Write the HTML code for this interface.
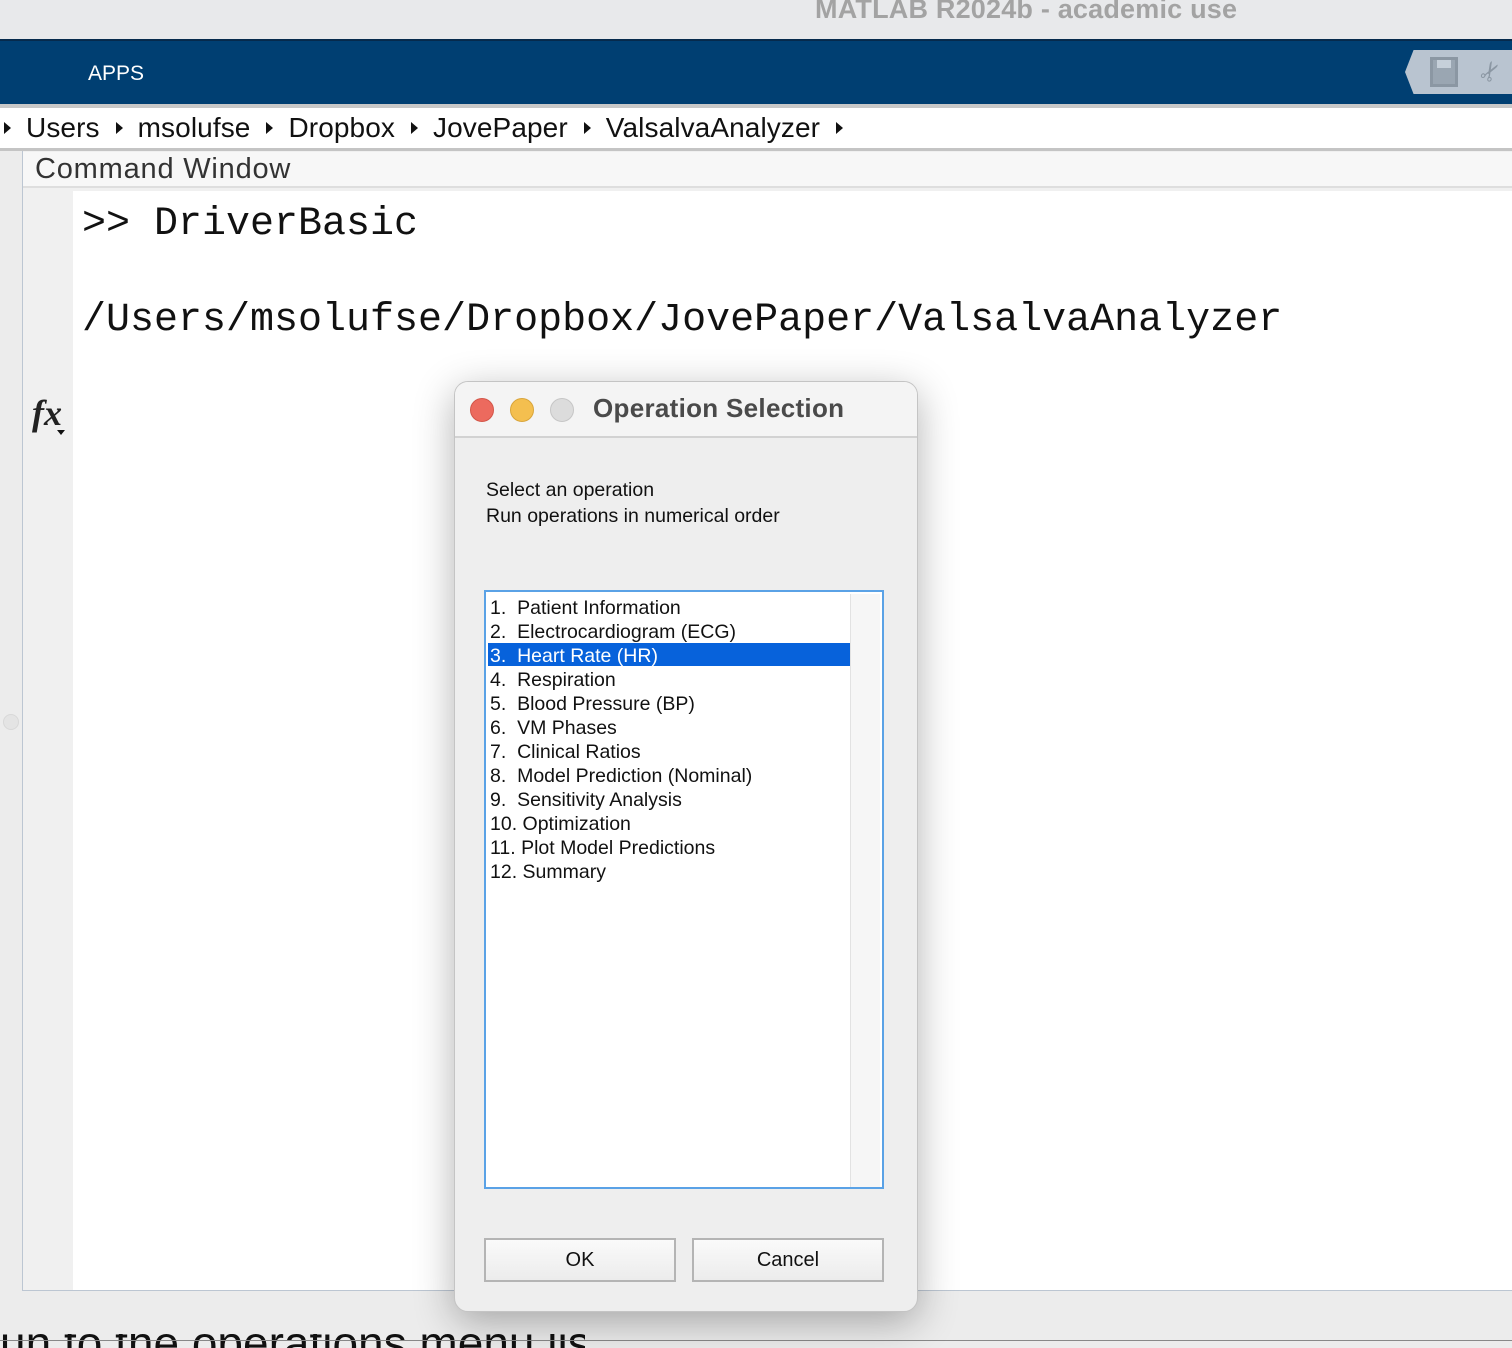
<!DOCTYPE html>
<html><head><meta charset="utf-8"><style>
*{margin:0;padding:0;box-sizing:border-box}
body{width:1512px;height:1346px;overflow:hidden;background:#ececec;font-family:"Liberation Sans",sans-serif;position:relative}
.abs{position:absolute}
.mono{font-family:"Liberation Mono",monospace}
.li{position:absolute;left:4px;font-size:19.5px;height:24px;line-height:24px;color:#111;white-space:pre}
.btn{position:absolute;top:1238px;width:192px;height:44px;border:2px solid #b4b4b4;background:linear-gradient(#fafafa,#ececec);font-size:20px;text-align:center;line-height:40px;color:#111}
.arr{display:inline-block;width:0;height:0;border-top:6px solid transparent;border-bottom:6px solid transparent;border-left:7px solid #111;margin:0 15px 3px 16px;vertical-align:middle}
</style></head><body>
<div class="abs" style="left:0;top:0;width:1512px;height:40px;background:#e8e9eb"></div>
<div class="abs" style="left:815px;top:-6px;font-size:27px;font-weight:bold;color:#a3a3a3;white-space:nowrap;letter-spacing:0.2px">MATLAB R2024b - academic use</div>
<div class="abs" style="left:0;top:39px;width:1512px;height:65px;background:#003f72;border-top:2px solid #062a4c"></div>
<div class="abs" style="left:88px;top:62px;font-size:21px;color:#fff">APPS</div>
<div class="abs" style="left:1405px;top:50px;width:107px;height:44px;background:#b9c4d0;clip-path:polygon(8% 0,100% 0,100% 100%,8% 100%,0 50%)"></div>
<div class="abs" style="left:1430px;top:57px;width:28px;height:30px;background:#9aa6b2;border:3px solid #8b97a3"></div>
<div class="abs" style="left:1437px;top:60px;width:14px;height:8px;background:#c6d0da"></div>
<div class="abs" style="left:1480px;top:56px;color:#8b97a3;font-size:26px;transform:rotate(-60deg)">✂</div>
<div class="abs" style="left:0;top:104px;width:1512px;height:4px;background:#c8c8c8"></div>
<div class="abs" style="left:0;top:108px;width:1512px;height:40px;background:#fff"></div>
<div class="abs" style="left:-12px;top:112px;font-size:28px;color:#111;white-space:nowrap;letter-spacing:0.1px"><span class="arr"></span>Users<span class="arr"></span>msolufse<span class="arr"></span>Dropbox<span class="arr"></span>JovePaper<span class="arr"></span>ValsalvaAnalyzer<span class="arr"></span></div>
<div class="abs" style="left:0;top:148px;width:1512px;height:3px;background:#c4c4c4"></div>
<div class="abs" style="left:22px;top:151px;width:1490px;height:1140px;border-left:1px solid #bcc6d2;border-bottom:1px solid #bcc6d2;background:#f0f0f0"></div>
<div class="abs" style="left:23px;top:152px;width:1489px;height:36px;background:#f7f7f7;border-bottom:2px solid #dedede"></div>
<div class="abs" style="left:35px;top:153px;font-size:29px;color:#333;letter-spacing:0.8px">Command Window</div>
<div class="abs" style="left:73px;top:191px;width:1439px;height:1099px;background:#fff"></div>
<div class="abs mono" style="left:82px;top:202px;font-size:40px;color:#111;white-space:pre">&gt;&gt; DriverBasic</div>
<div class="abs mono" style="left:82px;top:298px;font-size:40px;color:#111;white-space:pre">/Users/msolufse/Dropbox/JovePaper/ValsalvaAnalyzer</div>
<div class="abs" style="left:32px;top:392px;font-size:36px;font-style:italic;font-weight:bold;font-family:'Liberation Serif',serif;color:#222">fx</div>
<div class="abs" style="left:57px;top:430px;width:0;height:0;border-left:4px solid transparent;border-right:4px solid transparent;border-top:5px solid #111"></div>
<div class="abs" style="left:3px;top:714px;width:16px;height:16px;border-radius:50%;background:#e4e4e4;border:1px solid #d8d8d8"></div>
<div class="abs" style="left:0;top:1334px;width:585px;height:14px;overflow:hidden"><div style="font-size:46px;margin-top:-18px;color:#111;white-space:nowrap">un to the operations menu list.</div></div>
<div class="abs" style="left:0;top:1340px;width:1512px;height:1px;background:#888"></div>
<div class="abs" style="left:454px;top:381px;width:464px;height:931px;background:#eeeeee;border:1px solid #c4c4c4;border-radius:14px;box-shadow:0 10px 40px rgba(0,0,0,.3);overflow:hidden">
 <div style="height:56px;background:#f4f4f4;border-bottom:2px solid #d2d2d2"></div>
</div>
<div class="abs" style="left:470px;top:398px;width:24px;height:24px;border-radius:50%;background:#ec6a5e;border:1px solid #d35649"></div>
<div class="abs" style="left:510px;top:398px;width:24px;height:24px;border-radius:50%;background:#f4bf4f;border:1px solid #d9a53a"></div>
<div class="abs" style="left:550px;top:398px;width:24px;height:24px;border-radius:50%;background:#dcdcdc;border:1px solid #c6c6c6"></div>
<div class="abs" style="left:593px;top:393px;font-size:26px;font-weight:bold;color:#4a4a4a;letter-spacing:0.3px">Operation Selection</div>
<div class="abs" style="left:486px;top:477px;font-size:19.5px;color:#111;line-height:26px">Select an operation<br>Run operations in numerical order</div>
<div class="abs" style="left:484px;top:590px;width:400px;height:599px;border:2px solid #5aa2e6;background:#fff">
 <div class="abs" style="left:364px;top:2px;width:30px;height:593px;background:#f6f6f6;border-left:1px solid #e2e2e2"></div>
 <div class="abs" style="left:2px;top:51px;width:362px;height:23px;background:#0762db"></div>
 <div class="li" style="top:4px">1.  Patient Information</div>
 <div class="li" style="top:28px">2.  Electrocardiogram (ECG)</div>
 <div class="li" style="top:52px;color:#fff">3.  Heart Rate (HR)</div>
 <div class="li" style="top:76px">4.  Respiration</div>
 <div class="li" style="top:100px">5.  Blood Pressure (BP)</div>
 <div class="li" style="top:124px">6.  VM Phases</div>
 <div class="li" style="top:148px">7.  Clinical Ratios</div>
 <div class="li" style="top:172px">8.  Model Prediction (Nominal)</div>
 <div class="li" style="top:196px">9.  Sensitivity Analysis</div>
 <div class="li" style="top:220px">10. Optimization</div>
 <div class="li" style="top:244px">11. Plot Model Predictions</div>
 <div class="li" style="top:268px">12. Summary</div>
</div>
<div class="btn" style="left:484px">OK</div>
<div class="btn" style="left:692px">Cancel</div>
</body></html>
